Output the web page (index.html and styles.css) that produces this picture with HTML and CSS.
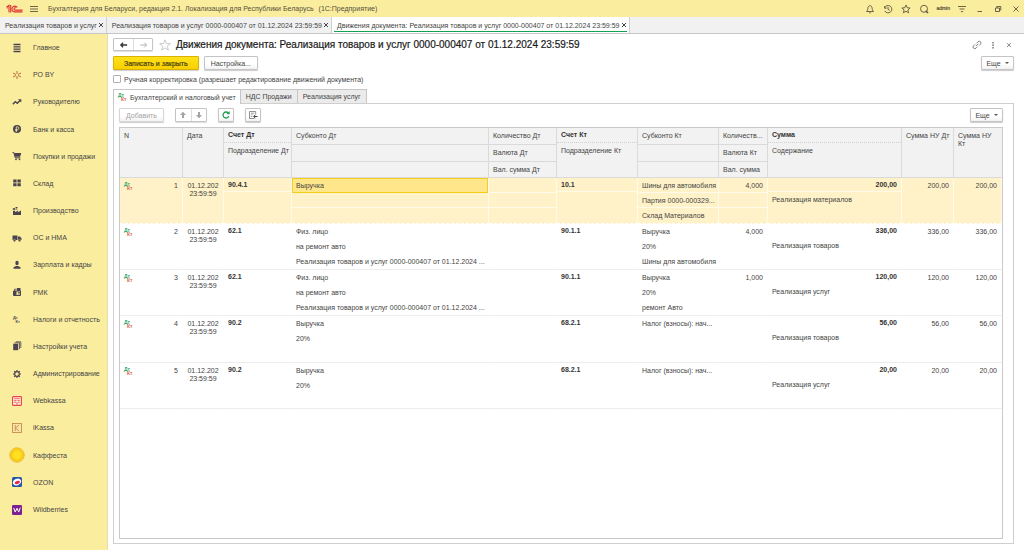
FILE: index.html
```html
<!DOCTYPE html>
<html lang="ru">
<head>
<meta charset="utf-8">
<title>Движения документа</title>
<link rel="stylesheet" href="styles.css">
</head>
<body>
<svg class="defs" aria-hidden="true">
  <symbol id="x" viewBox="0 0 8 8"><path d="M2 2l4 4M6 2l-4 4" fill="none" stroke="currentColor"/></symbol>
</svg>
<div class="app">
  <header class="topbar">
    <svg class="logo" viewBox="0 0 17 10"><g fill="none" stroke="#dc3030" stroke-width="1.1"><path d="M.5 3.2L3 1.3V8.500M1.300 4.500V3.600M4.700 8.500V1"/><path d="M11.300 3.500A2.900 2.900 0 1 0 8.700 7.900H16.500"/><path d="M9.900 4A1.200 1.200 0 1 0 8.800 6.100H16.500"/></g></svg>
    <button class="icon-btn menu-btn" aria-label="Меню"><svg viewBox="0 0 10 10"><path d="M1 2.500h8M1 5h8M1 7.500h8" fill="none" stroke="#5b563f" stroke-width=".9"/></svg></button>
    <span class="app-title">Бухгалтерия для Беларуси, редакция 2.1. Локализация для Республики Беларусь</span>
    <span class="app-kind">(1С:Предприятие)</span>
    <div class="top-tools">
      <button class="icon-btn" aria-label="Уведомления"><svg viewBox="0 0 10 10"><path d="M1.500 7.500c1.200-1 1.200-2 1.400-3.300C3 2.700 3.900 1.700 5 1.700s2 1 2.100 2.500C7.300 5.500 7.300 6.500 8.500 7.500zM4.200 8.800h1.600" class="ln"/></svg></button>
      <button class="icon-btn" aria-label="История"><svg viewBox="0 0 10 10"><path d="M1.600 2.200v2h2M1.600 4A3.700 3.700 0 1 1 1.800 6.800M5 2.800V5.300l1.700 1" class="ln"/></svg></button>
      <button class="icon-btn" aria-label="Избранное"><svg viewBox="0 0 10 10"><path d="M5 1l1.200 2.700 2.900.3-2.200 1.900.7 2.900L5 7.300 2.400 8.800l.7-2.900L.9 4l2.900-.3z" class="ln"/></svg></button>
      <button class="icon-btn" aria-label="Поиск"><svg viewBox="0 0 10 10"><circle cx="5" cy="4.800" r="3.500" class="ln"/><path d="M6.800 6.800l2.200 2.200" class="ln thick"/></svg></button>
      <span class="user">admin</span>
      <button class="icon-btn" aria-label="Настройки"><svg viewBox="0 0 10 10"><path d="M1 2.500h8M2.500 5h5" class="ln"/><path d="M3.700 7h2.600L5 8.600z" fill="#5b563f"/></svg></button>
      <button class="icon-btn" aria-label="Свернуть"><svg viewBox="0 0 10 10"><path d="M2.500 7.500h4.500" class="ln"/></svg></button>
      <button class="icon-btn" aria-label="Развернуть"><svg viewBox="0 0 10 10"><path d="M2.500 4h4v3.500h-4zM3.800 4V2.500h4V6H6.500" class="ln"/></svg></button>
      <button class="icon-btn" aria-label="Закрыть"><svg viewBox="0 0 10 10"><path d="M2.500 2.500l5 5M7.500 2.500l-5 5" class="ln"/></svg></button>
    </div>
  </header>

  <nav class="window-tabs">
    <div class="wtab"><a href="#">Реализация товаров и услуг</a><button class="tab-x" aria-label="Закрыть"><svg><use href="#x"/></svg></button></div>
    <div class="wtab"><a href="#">Реализация товаров и услуг 0000-000407 от 01.12.2024 23:59:59</a><button class="tab-x" aria-label="Закрыть"><svg><use href="#x"/></svg></button></div>
    <div class="wtab active"><a href="#">Движения документа: Реализация товаров и услуг 0000-000407 от 01.12.2024 23:59:59</a><button class="tab-x" aria-label="Закрыть"><svg><use href="#x"/></svg></button></div>
  </nav>

  <div class="body">
    <nav class="sidebar">
      <a href="#"><svg viewBox="0 0 10 10"><path d="M1.500 1.500h7M1.500 3.800h7M1.500 6.200h7M1.500 8.500h7" stroke="#4b4450" stroke-width="1.300"/></svg>Главное</a>
      <a href="#"><svg viewBox="0 0 10 10"><path d="M5 1v3M5 6v3M1 3l3 1.500M6 5.500l3 1.500M1 7l3-1.500M6 4.500L9 3" stroke="#b0603c" stroke-width=".9"/></svg>РО BY</a>
      <a href="#"><svg viewBox="0 0 10 10"><path d="M.8 7.200l2.500-2.500 2 1.600L8 3.600" fill="none" stroke="#4b4450" stroke-width="1.400"/><path d="M6 2.200h3.300v3.300z" fill="#4b4450"/></svg>Руководителю</a>
      <a href="#"><svg viewBox="0 0 10 10"><circle cx="5" cy="5" r="4" fill="#4b4450"/><path d="M4.300 8V2.800h1.200a1.300 1.300 0 0 1 0 2.700H3.200M3.200 6.700h2.300" fill="none" stroke="#fbed9e" stroke-width=".8"/></svg>Банк и касса</a>
      <a href="#"><svg viewBox="0 0 10 10"><path d="M.5 1.500h1.300l1.500 5.300h5" fill="none" stroke="#4b4450"/><path d="M2 2h7.200L8.200 5.800H3z" fill="#4b4450"/><circle cx="4" cy="8.300" r=".9" fill="#4b4450"/><circle cx="7.500" cy="8.300" r=".9" fill="#4b4450"/></svg>Покупки и продажи</a>
      <a href="#"><svg viewBox="0 0 10 10"><path d="M1.200 1.500h3.400v3H1.200zM5.400 1.500h3.400v3H5.400zM1.200 5.200h3.400v3H1.200zM5.400 5.200h3.400v3H5.400z" fill="#4b4450"/></svg>Склад</a>
      <a href="#"><svg viewBox="0 0 10 10"><path d="M1 9V4.800h2.200v1.400l2.700-1.700v1.700L9 4.500V9z" fill="#4b4450"/><path d="M1.300 4V2.500h1.500V4M3.500 1.500h2M3.800 3h1.500" stroke="#4b4450" fill="none"/></svg>Производство</a>
      <a href="#"><svg viewBox="0 0 10 10"><path d="M.5 2.500h5V7h-5zM6 3.500h2l1.500 1.800V7H6z" fill="#4b4450"/><circle cx="2.500" cy="7.500" r="1.200" fill="#4b4450" stroke="#fbed9e" stroke-width=".4"/><circle cx="7.500" cy="7.500" r="1.200" fill="#4b4450" stroke="#fbed9e" stroke-width=".4"/></svg>ОС и НМА</a>
      <a href="#"><svg viewBox="0 0 10 10"><ellipse cx="5" cy="3" rx="1.700" ry="2.200" fill="#4b4450"/><path d="M1.500 8.700V7.300L4 6h2l2.500 1.300v1.400z" fill="#4b4450"/></svg>Зарплата и кадры</a>
      <a href="#"><svg viewBox="0 0 10 10"><path d="M1.500 4h7v4.500h-7z" fill="none" stroke="#4b4450"/><path d="M1.500 4h3v4.500h-3zM5 1h3.500v3H5z" fill="#4b4450"/><path d="M2.500 4V2.200h2.300M5.800 5.500H8M5.800 7H8" stroke="#4b4450" fill="none" stroke-width=".8"/></svg>РМК</a>
      <a href="#"><svg viewBox="0 0 10 10"><text x="1" y="4.500" class="mono">Дт</text><text x="3.500" y="8.800" class="mono">Кт</text></svg>Налоги и отчетность</a>
      <a href="#"><svg viewBox="0 0 10 10"><path d="M1.200 2.700h5v6.500h-5z" fill="#4b4450"/><path d="M2.500 1.800h5v6.300M3.800.8h5v6.200" fill="none" stroke="#4b4450" stroke-width=".8"/></svg>Настройки учета</a>
      <a href="#"><svg viewBox="0 0 10 10"><circle cx="5" cy="5" r="2.300" fill="none" stroke="#4b4450" stroke-width="1.200"/><path d="M5 1v1.500M5 7.500V9M1 5h1.500M7.500 5H9M2.200 2.200l1 1M6.800 6.800l1 1M2.200 7.800l1-1M6.800 3.200l1-1" stroke="#4b4450" stroke-width="1.200"/></svg>Администрирование</a>
      <a href="#"><svg viewBox="0 0 10 10"><rect x=".6" y=".6" width="8.800" height="8.800" rx=".6" fill="#fff3d8" stroke="#e8404e" stroke-width="1.100"/><path d="M2.200 2.700h5.600M2.200 4.600h2.300M5.500 4.600h2.300M2.200 6.300h2.300M5.500 6.300h2.300M4 7.900h2" stroke="#e8404e" stroke-width=".8"/></svg>Webkassa</a>
      <a href="#"><svg viewBox="0 0 10 10"><rect x=".5" y=".5" width="9" height="9" fill="#fbe3a0" stroke="#c08248" stroke-width=".8"/><path d="M3.300 2v6M7 2L3.600 5 7 8" fill="none" stroke="#c08248" stroke-width=".8"/></svg>iKassa</a>
      <a href="#"><svg class="big" viewBox="0 0 16 16"><circle cx="8" cy="8" r="7.200" fill="#fbd01c" stroke="#dfa11e" stroke-width=".8" stroke-dasharray="1.600 .5"/><circle cx="8" cy="8" r="5" fill="#ffdf20" stroke="#efb81c" stroke-width=".6"/></svg>Каффеста</a>
      <a href="#"><svg viewBox="0 0 10 10"><rect width="10" height="10" rx="1.500" fill="#2758a8"/><ellipse cx="5" cy="5" rx="4.300" ry="3.200" fill="#fff" transform="rotate(-25 5 5)"/><ellipse cx="5.200" cy="5.500" rx="2.700" ry="1.600" fill="#e8294b" transform="rotate(-15 5 5)"/></svg>OZON</a>
      <a href="#"><svg viewBox="0 0 10 10"><rect width="10" height="10" rx="1.200" fill="#7d2290"/><path d="M1.700 3l1.500 4L5 3.300 6.700 7 8.300 2.700" fill="none" stroke="#fff"/></svg>Wildberries</a>
    </nav>

    <main class="doc">
      <div class="title-row">
        <div class="nav-pair">
          <button aria-label="Назад"><svg viewBox="0 0 10 8"><path d="M9 4H2.500M4.500 1.500L2 4l2.500 2.500" fill="none" stroke="#333" stroke-width="1.400"/></svg></button>
          <button aria-label="Вперед"><svg viewBox="0 0 10 8"><path d="M1.500 4H8M6 1.500L8.500 4 6 6.500" fill="none" stroke="#a8a8a8"/></svg></button>
        </div>
        <button class="icon-btn star" aria-label="В избранное"><svg viewBox="0 0 12 12"><path d="M6 .8l1.400 3.700 4 .2-3.100 2.500 1.100 3.900L6 8.900l-3.400 2.200 1.100-3.900L.6 4.700l4-.2z" fill="none" stroke="#b5b5b5" stroke-width=".7"/></svg></button>
        <h1>Движения документа: Реализация товаров и услуг 0000-000407 от 01.12.2024 23:59:59</h1>
        <div class="doc-tools">
          <button class="icon-btn" aria-label="Ссылка"><svg viewBox="0 0 10 10"><path d="M4.500 3.300L6 1.800a1.700 1.700 0 0 1 2.500 2.400L7 5.700M5.500 6.700L4 8.200A1.700 1.700 0 0 1 1.500 5.800L3 4.300M3.800 6.200l2.400-2.400" fill="none" stroke="#777" stroke-width=".9"/></svg></button>
          <button class="icon-btn" aria-label="Меню"><svg viewBox="0 0 10 10"><path d="M4.300 2h1.500v1.400H4.300zM4.300 4.500h1.500v1.400H4.300zM4.300 7h1.500v1.400H4.300z" fill="#777"/></svg></button>
          <button class="icon-btn" aria-label="Закрыть"><svg viewBox="0 0 10 10"><path d="M3 3.200l3.800 3.800M6.800 3.200L3 7" fill="none" stroke="#777" stroke-width=".9"/></svg></button>
        </div>
      </div>

      <div class="cmd-row">
        <button class="btn primary">Записать и закрыть</button>
        <button class="btn">Настройка...</button>
        <button class="btn more">Еще <i class="caret"></i></button>
      </div>

      <label class="check"><input type="checkbox"><span>Ручная корректировка (разрешает редактирование движений документа)</span></label>

      <div class="page-tabs">
        <button class="ptab active"><span class="dk"><i>Дт</i><i>Кт</i></span>Бухгалтерский и налоговый учет</button>
        <button class="ptab">НДС Продажи</button>
        <button class="ptab">Реализация услуг</button>
      </div>

      <section class="panel">
        <div class="tools">
          <button class="btn add" disabled>Добавить</button>
          <div class="nav-pair updown">
            <button aria-label="Вверх"><svg viewBox="0 0 8 8"><path d="M4 .8L7 4H5v3H3V4H1z" fill="#a4a4a4"/></svg></button>
            <button aria-label="Вниз"><svg viewBox="0 0 8 8"><path d="M4 7.200L1 4h2V1h2v3h2z" fill="#a4a4a4"/></svg></button>
          </div>
          <button class="btn sq" aria-label="Обновить"><svg viewBox="0 0 10 10"><path d="M7.800 6.300A3 3 0 1 1 7.300 3" fill="none" stroke="#1f9b50" stroke-width="1.300"/><path d="M8.600 1v3.300H5.300z" fill="#1f9b50"/></svg></button>
          <button class="btn sq" aria-label="Показать"><svg viewBox="0 0 10 10"><path d="M6.500 8.500H1.500v-7h6.200v3" fill="none" stroke="#777" stroke-width=".8"/><path d="M2.800 3.200h3.700M2.800 4.900h2M2.800 6.600h1.500" stroke="#888" stroke-width=".8"/><path d="M9.500 6.500H6M7.300 4.800L5.600 6.500l1.700 1.700" fill="none" stroke="#444"/></svg></button>
          <button class="btn more">Еще <i class="caret"></i></button>
        </div>

        <div class="table-box">
          <table>
            <colgroup><col class="c-n"><col class="c-date"><col class="c-acc"><col class="c-sub"><col class="c-qty"><col class="c-acck"><col class="c-subk"><col class="c-qtyk"><col class="c-sum"><col class="c-nu"><col class="c-nuk"></colgroup>
            <thead>
              <tr>
                <th>N</th>
                <th>Дата</th>
                <th class="two"><div><b>Счет Дт</b></div><div>Подразделение Дт</div></th>
                <th class="three"><div>Субконто Дт</div><div></div><div></div></th>
                <th class="three"><div>Количество Дт</div><div>Валюта Дт</div><div>Вал. сумма Дт</div></th>
                <th class="two"><div><b>Счет Кт</b></div><div>Подразделение Кт</div></th>
                <th class="three"><div>Субконто Кт</div><div></div><div></div></th>
                <th class="three"><div>Количеств...</div><div>Валюта Кт</div><div>Вал. сумма</div></th>
                <th class="two"><div><b>Сумма</b></div><div>Содержание</div></th>
                <th class="nu">Сумма НУ Дт</th>
                <th>Сумма НУ Кт</th>
              </tr>
            </thead>
            <tbody>
              <tr class="selected">
                <td><div class="num"><span class="dk"><i>Дт</i><i>Кт</i></span>1</div></td>
                <td class="date">01.12.202 23:59:59</td>
                <td class="two"><div><b>90.4.1</b></div><div></div></td>
                <td class="three"><div class="cursor">Выручка</div><div></div><div></div></td>
                <td class="three"><div></div><div></div><div></div></td>
                <td class="two"><div><b>10.1</b></div><div></div></td>
                <td class="three"><div>Шины для автомобиля</div><div>Партия 0000-000329...</div><div>Склад Материалов</div></td>
                <td class="three"><div class="r">4,000</div><div></div><div></div></td>
                <td class="two"><div class="r"><b>200,00</b></div><div>Реализация материалов</div></td>
                <td class="r">200,00</td>
                <td class="r">200,00</td>
              </tr>
              <tr>
                <td><div class="num"><span class="dk"><i>Дт</i><i>Кт</i></span>2</div></td>
                <td class="date">01.12.202 23:59:59</td>
                <td class="two"><div><b>62.1</b></div></td>
                <td class="three"><div>Физ. лицо</div><div>на ремонт авто</div><div>Реализация товаров и услуг 0000-000407 от 01.12.2024 ...</div></td>
                <td></td>
                <td class="two"><div><b>90.1.1</b></div></td>
                <td class="three"><div>Выручка</div><div>20%</div><div>Шины для автомобиля</div></td>
                <td class="three"><div class="r">4,000</div></td>
                <td class="two"><div class="r"><b>336,00</b></div><div>Реализация товаров</div></td>
                <td class="r">336,00</td>
                <td class="r">336,00</td>
              </tr>
              <tr>
                <td><div class="num"><span class="dk"><i>Дт</i><i>Кт</i></span>3</div></td>
                <td class="date">01.12.202 23:59:59</td>
                <td class="two"><div><b>62.1</b></div></td>
                <td class="three"><div>Физ. лицо</div><div>на ремонт авто</div><div>Реализация товаров и услуг 0000-000407 от 01.12.2024 ...</div></td>
                <td></td>
                <td class="two"><div><b>90.1.1</b></div></td>
                <td class="three"><div>Выручка</div><div>20%</div><div>ремонт Авто</div></td>
                <td class="three"><div class="r">1,000</div></td>
                <td class="two"><div class="r"><b>120,00</b></div><div>Реализация услуг</div></td>
                <td class="r">120,00</td>
                <td class="r">120,00</td>
              </tr>
              <tr class="tall">
                <td><div class="num"><span class="dk"><i>Дт</i><i>Кт</i></span>4</div></td>
                <td class="date">01.12.202 23:59:59</td>
                <td class="two"><div><b>90.2</b></div></td>
                <td class="three"><div>Выручка</div><div>20%</div></td>
                <td></td>
                <td class="two"><div><b>68.2.1</b></div></td>
                <td class="three"><div>Налог (взносы): нач...</div></td>
                <td></td>
                <td class="two"><div class="r"><b>56,00</b></div><div>Реализация товаров</div></td>
                <td class="r">56,00</td>
                <td class="r">56,00</td>
              </tr>
              <tr>
                <td><div class="num"><span class="dk"><i>Дт</i><i>Кт</i></span>5</div></td>
                <td class="date">01.12.202 23:59:59</td>
                <td class="two"><div><b>90.2</b></div></td>
                <td class="three"><div>Выручка</div><div>20%</div></td>
                <td></td>
                <td class="two"><div><b>68.2.1</b></div></td>
                <td class="three"><div>Налог (взносы): нач...</div></td>
                <td></td>
                <td class="two"><div class="r"><b>20,00</b></div><div>Реализация услуг</div></td>
                <td class="r">20,00</td>
                <td class="r">20,00</td>
              </tr>
            </tbody>
          </table>
        </div>
      </section>
    </main>
  </div>
</div>
</body>
</html>
```

FILE: styles.css
```css
* { box-sizing: border-box; }

body {
  margin: 0;
  font: 7px/9px "Liberation Sans", Arial, sans-serif;
  color: #444;
  background: #fff;
}

a { color: inherit; text-decoration: none; }
button { font: inherit; color: inherit; margin: 0; padding: 0; border: 0; background: none; }
h1 { margin: 0; font-size: 10px; line-height: 14px; font-weight: 400; color: #1a1a1a; white-space: nowrap; -webkit-text-stroke: 0.2px; }
svg { display: block; flex: none; }
.defs { position: absolute; width: 0; height: 0; }
.mono { font: bold 4px "Liberation Sans", Arial, sans-serif; fill: #4b4450; }
.ln { fill: none; stroke: #5b563f; stroke-width: 0.9; }
.thick { stroke-width: 1.6; }

/* debit / credit mark */
.dk { display: flex; flex-direction: column; width: 10px; font: bold 5px/4px "Liberation Sans", Arial, sans-serif; text-align: left; }
.dk i { font-style: normal; color: #2fa56c; }
.dk i + i { padding-left: 3px; color: #d86a4a; }

.app { display: flex; flex-direction: column; height: 100vh; }

/* title bar */
.topbar {
  display: flex;
  align-items: center;
  flex: none;
  height: 17px;
  padding: 0 3px 0 6px;
  background: #fbed9e;
  color: #55503c;
  white-space: nowrap;
}
.logo { width: 17px; height: 10px; }
.icon-btn svg { width: 10px; height: 10px; }
.menu-btn { margin: 0 9px 0 6px; }
.app-kind { margin-left: 5px; }
.top-tools { display: flex; align-items: center; gap: 8px; margin-left: auto; }
.user { margin: 0 -1px; font-size: 5px; -webkit-text-stroke: 0.2px; }

/* open windows */
.window-tabs {
  display: flex;
  flex: none;
  height: 17px;
  background: #f1f1f1;
  border-bottom: 1px solid #c6c6c6;
}
.wtab {
  display: flex;
  align-items: center;
  padding: 0 1px 0 5px;
  border-right: 1px solid #d0d0d0;
  white-space: nowrap;
}
.tab-x svg { width: 8px; height: 8px; }
.wtab.active { background: linear-gradient(#12a052, #12a052) center 14px / calc(100% - 4px) 1px no-repeat #fff; }

.body { display: flex; flex: 1; min-height: 0; }

/* sections */
.sidebar {
  display: flex;
  flex-direction: column;
  flex: none;
  width: 108px;
  padding-bottom: 27px;
  background: #fbed9e;
  border-right: 1px solid #e6dcae;
}
.sidebar a {
  display: flex;
  flex: 1;
  align-items: center;
  gap: 11px;
  padding-left: 12px;
  white-space: nowrap;
}
.sidebar svg { width: 10px; height: 10px; }
.sidebar svg.big { width: 16px; height: 16px; margin: 0 -3px; }

/* document */
.doc { display: flex; flex-direction: column; flex: 1; min-width: 0; padding: 3px 10px 6px 5px; }
.title-row { display: flex; align-items: center; height: 15px; }
.nav-pair { display: flex; border: 1px solid #c4c4c4; border-radius: 1px; box-shadow: 0 1px 1px #ddd; }
.nav-pair button { display: flex; align-items: center; justify-content: center; width: 19px; height: 11px; }
.nav-pair button + button { border-left: 1px solid #ddd; }
.nav-pair svg { width: 9px; height: 8px; }
.star { margin: 0 5px 0 6px; }
.star svg { width: 12px; height: 12px; }
.doc-tools { display: flex; gap: 6px; margin-left: auto; }

.cmd-row { display: flex; gap: 5px; margin-top: 4px; }
.btn {
  display: flex;
  align-items: center;
  justify-content: center;
  height: 14px;
  padding: 0 6px;
  border: 1px solid #c4c4c4;
  border-radius: 1px;
  box-shadow: 0 1px 1px #ccc;
  background: linear-gradient(#fff 60%, #f2f2f2);
  white-space: nowrap;
}
.primary { padding: 0 10px; background: linear-gradient(#ffe11a, #f8d000); border-color: #d9b200; color: #4a4010; -webkit-text-stroke: 0.2px; }
.more { width: 33px; margin-left: auto; }
.caret { margin-left: 4px; border: 2px solid transparent; border-top-color: #555; border-bottom: 0; }

.check { display: flex; align-items: center; gap: 3px; margin-top: 4px; height: 10px; }
.check input { appearance: none; width: 8px; height: 8px; margin: 0; border: 1px solid #b0b0b0; border-radius: 1px; background: #fff; }

.page-tabs { display: flex; margin-top: 5px; }
.ptab {
  display: flex;
  align-items: center;
  height: 14px;
  padding: 0 5px;
  background: #ebebeb;
  border: 1px solid #c6c6c6;
  border-left-width: 0;
  border-bottom: 0;
}
.ptab.active { height: 15px; margin-bottom: -1px; padding: 0 4px; background: #fff; border-left-width: 1px; gap: 2px; z-index: 1; }

.panel {
  display: flex;
  flex-direction: column;
  flex: 1;
  min-height: 0;
  padding: 4px 10px 4px 5px;
  border: 1px solid #cfcfcf;
}
.tools { display: flex; gap: 11px; margin-bottom: 5px; }
.btn:disabled { color: #a3a3a3; border-color: #d6d6d6; }
.sq { width: 16px; padding: 0; }
.sq svg { width: 10px; height: 10px; }
.updown button { width: 15px; height: 12px; }
.updown svg { width: 8px; height: 8px; }

.table-box { flex: 1; min-height: 0; border: 1px solid #c9c9c9; overflow: hidden; }
table { width: 100%; border-collapse: separate; border-spacing: 0; table-layout: fixed; }
.c-n { width: 63px; }
.c-date { width: 41px; }
.c-acc { width: 68px; }
.c-qty { width: 68px; }
.c-acck { width: 81px; }
.c-subk { width: 81px; }
.c-qtyk { width: 49px; }
.c-sum { width: 134px; }
.c-nu { width: 52px; }
.c-nuk { width: 48px; }

th, td { padding: 4px 4px 0; vertical-align: top; text-align: left; font-weight: 400; }
th { height: 50px; background: #f2f2f2; border-right: 1px solid #dadada; border-bottom: 1px solid #dadada; line-height: 8px; }
th:last-child { border-right: 0; }
th.nu { padding-right: 0; }
td { height: 46px; border-right: 1px solid transparent; border-bottom: 1px solid #ececec; line-height: 8px; }
.tall td { height: 47px; }
th.two, th.three, td.two, td.three { padding: 0; }
.two div, .three div { padding: 0 0 0 4px; white-space: nowrap; }
th.three div { height: 17px; line-height: 15px; border-bottom: 1px solid #dadada; }
th.three div:last-child { height: 15px; border-bottom: 0; }
th.two div { height: 15px; line-height: 13px; border-bottom: 1px dotted #d0d0d0; }
th.two div:last-child { border-bottom: 0; height: 17px; line-height: 15px; }
td.three div { height: 15px; line-height: 15px; }
td.two div { height: 14px; line-height: 14px; }
td.two div + div { line-height: 15px; height: 15px; }
b { color: #333; }
.r { text-align: right; }
td.three .r, td.two .r { text-align: right; padding-right: 4px; }
td.date { text-align: center; padding: 4px 3px 0; }
.num { display: flex; justify-content: space-between; }

.selected td { background: #fff2c8; border-right: 1px solid #fffaea; border-bottom: 1px dashed #fff; }
.selected .three div, .selected .two div:first-child { border-bottom: 1px solid #fffaea; }
.selected .three div:last-child { border-bottom: 0; }
.selected .three .cursor { background: #ffe68a; border: 1px solid #f3cf1c; line-height: 13px; padding: 0 3px; }
```
